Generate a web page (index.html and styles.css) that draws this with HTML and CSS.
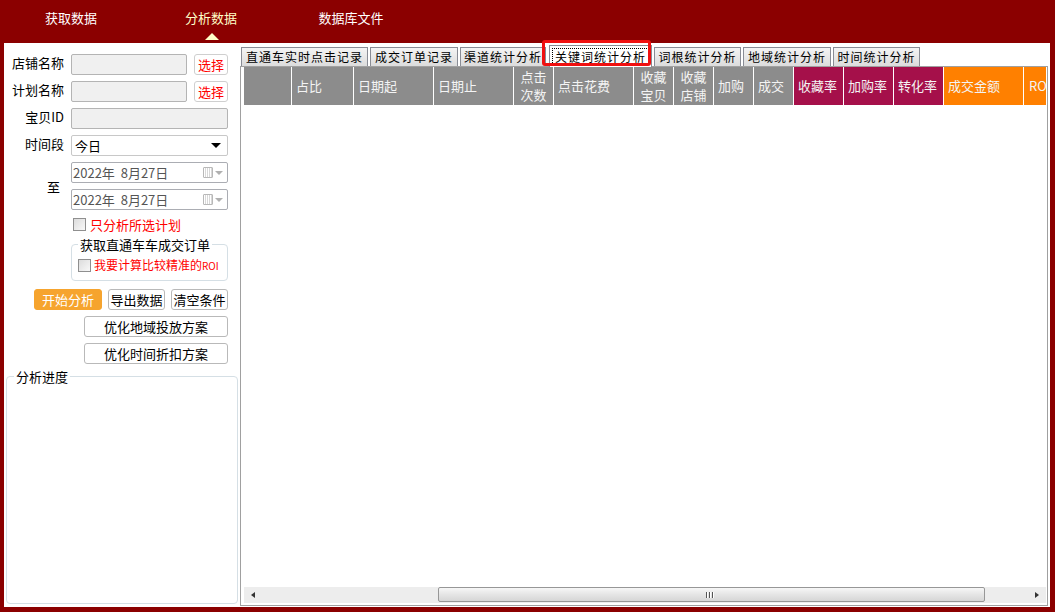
FILE: index.html
```html
<!DOCTYPE html>
<html lang="zh-CN">
<head>
<meta charset="utf-8">
<title>分析数据</title>
<link rel="stylesheet" href="styles.css">
</head>
<body>
<div class="app">
  <nav class="topnav">
    <div class="nav-item">获取数据</div>
    <div class="nav-item active">分析数据</div>
    <div class="nav-item">数据库文件</div>
  </nav>
  <div class="main">
    <aside class="side">
      <div class="form">
        <div class="row">
          <label class="lbl">店铺名称</label>
          <div class="input disabled short"></div>
          <button class="pick">选择</button>
        </div>
        <div class="row">
          <label class="lbl">计划名称</label>
          <div class="input disabled short"></div>
          <button class="pick">选择</button>
        </div>
        <div class="row">
          <label class="lbl">宝贝ID</label>
          <div class="input disabled wide"></div>
        </div>
        <div class="row">
          <label class="lbl">时间段</label>
          <div class="input wide select"><span>今日</span><span class="caret"></span></div>
        </div>
        <div class="daterows">
          <label class="lbl to">至</label>
          <div class="dates">
            <div class="input wide date"><span>2022年&nbsp;&nbsp;8月27日</span><span class="cal"><i class="calbox"></i><i class="caldown"></i></span></div>
            <div class="input wide date"><span>2022年&nbsp;&nbsp;8月27日</span><span class="cal"><i class="calbox"></i><i class="caldown"></i></span></div>
          </div>
        </div>
        <div class="check-row">
          <span class="box"></span><span class="red">只分析所选计划</span>
        </div>
        <fieldset class="grp">
          <legend>获取直通车车成交订单</legend>
          <div class="check-row inner"><span class="box"></span><span class="red small">我要计算比较精准的<span class="roi">ROI</span></span></div>
        </fieldset>
        <div class="btn-row">
          <button class="btn primary">开始分析</button>
          <button class="btn">导出数据</button>
          <button class="btn">清空条件</button>
        </div>
        <button class="btn long">优化地域投放方案</button>
        <button class="btn long">优化时间折扣方案</button>
      </div>
      <fieldset class="progress">
        <legend>分析进度</legend>
      </fieldset>
    </aside>
    <section class="content">
      <div class="tabs">
        <div class="tab w1">直通车实时点击记录</div>
        <div class="tab w2">成交订单记录</div>
        <div class="tab w3">渠道统计分析</div>
        <div class="tab w4 sel"><span class="focus">关键词统计分析</span><span class="mark"></span></div>
        <div class="tab w5">词根统计分析</div>
        <div class="tab w6">地域统计分析</div>
        <div class="tab w7">时间统计分析</div>
      </div>
      <div class="grid">
        <div class="thead">
          <div class="th gray c0"></div>
          <div class="th gray c1">占比</div>
          <div class="th gray c2">日期起</div>
          <div class="th gray c2">日期止</div>
          <div class="th gray c4 two">点击<br>次数</div>
          <div class="th gray c2">点击花费</div>
          <div class="th gray c4 two">收藏<br>宝贝</div>
          <div class="th gray c4 two">收藏<br>店铺</div>
          <div class="th gray c4">加购</div>
          <div class="th gray c4">成交</div>
          <div class="th mag c5">收藏率</div>
          <div class="th mag c5">加购率</div>
          <div class="th mag c5">转化率</div>
          <div class="th org c2">成交金额</div>
          <div class="th org c6">RO</div>
        </div>
        <div class="tbody"></div>
        <div class="hscroll">
          <div class="arrow left"></div>
          <div class="track">
            <div class="pre"></div>
            <div class="thumb"><span class="grip"><i></i><i></i><i></i></span></div>
            <div class="post"></div>
          </div>
          <div class="arrow right"></div>
        </div>
      </div>
    </section>
  </div>
</div>
</body>
</html>
```

FILE: styles.css
```css
* { box-sizing: border-box; }
html, body { margin: 0; padding: 0; }
body {
  background: #8b0000;
  font-family: "Noto Sans CJK SC", "Noto Sans", sans-serif;
  font-size: 13px;
  color: #000;
  width: 1055px;
  height: 612px;
  overflow: hidden;
}
.app { display: flex; flex-direction: column; height: 612px; }

/* top navigation */
.topnav {
  height: 43px;
  display: flex;
  padding-left: 1px;
}
.nav-item {
  width: 140px;
  color: #fff;
  font-size: 13px;
  line-height: 13px;
  text-align: center;
  padding-top: 11px;
  position: relative;
}
.nav-item.active { color: #ffffc8; }
.nav-item.active::after {
  content: "";
  position: absolute;
  left: 64px;
  top: 33px;
  border-left: 7px solid transparent;
  border-right: 7px solid transparent;
  border-bottom: 7px solid #ffffc8;
}

/* main white area */
.main {
  margin: 0 5px 5px 4px;
  height: 564px;
  background: #fff;
  display: flex;
}

/* side */
.side {
  width: 236px;
  display: flex;
  flex-direction: column;
  padding: 11px 0 3px 2px;
}
.form {
  display: flex;
  flex-direction: column;
  padding-right: 10px;
}
.row {
  display: flex;
  align-items: flex-start;
  height: 21px;
  margin-bottom: 6px;
}
.lbl {
  width: 58px;
  text-align: right;
  margin-right: 7px;
  line-height: 13px;
  padding-top: 2px;
  color: #000;
}
.input {
  height: 21px;
  border: 1px solid #abadb3;
  border-radius: 2px;
  background: #fff;
}
.input.disabled { background: #f0f0f0; border-color: #b4b4b4; }
.input.short { width: 116px; }
.input.wide { width: 157px; }
.pick {
  margin-left: 7px;
  width: 34px;
  height: 21px;
  border: 1px solid #cfcfcf;
  border-radius: 3px;
  background: #fff;
  color: #f00;
  font-family: inherit;
  font-size: 13px;
  line-height: 13px;
  padding: 0;
}
.select {
  display: flex;
  align-items: center;
  justify-content: space-between;
  padding: 0 6px 0 3px;
  border-color: #c8c8c8;
  line-height: 13px;
}
.caret {
  width: 0; height: 0;
  border-left: 5px solid transparent;
  border-right: 5px solid transparent;
  border-top: 5px solid #000;
}
.daterows {
  display: flex;
  align-items: center;
  margin-bottom: 7px;
}
.lbl.to { padding-top: 0; padding-right: 4px; }
.dates { display: flex; flex-direction: column; gap: 6px; }
.date {
  display: flex;
  align-items: center;
  justify-content: space-between;
  padding: 0 4px 0 1px;
  color: #555;
  line-height: 13px;
}
.cal { display: flex; align-items: center; gap: 2px; }
.calbox {
  display: block;
  width: 10px; height: 11px;
  border: 1px solid #b8b8b8;
  background:
    repeating-linear-gradient(90deg, #fff 0 1px, #d8d8d8 1px 2px),
    #eee;
  border-radius: 1px;
}
.caldown {
  display: block;
  width: 0; height: 0;
  border-left: 4px solid transparent;
  border-right: 4px solid transparent;
  border-top: 4px solid #b0b0b0;
}
.check-row {
  display: flex;
  align-items: center;
  height: 14px;
  margin-left: 67px;
  gap: 4px;
  line-height: 13px;
  white-space: nowrap;
}
.box {
  width: 13px; height: 13px;
  flex-shrink: 0;
  border: 1px solid #8f8f8f;
  background: linear-gradient(135deg, #dcdcdc, #f8f8f8);
}
.red { color: #f00; }
.red.small { font-size: 12px; }
.roi { font-size: 10px; letter-spacing: 0; }
.grp {
  margin: 7px 0 0 65px;
  width: 157px;
  height: 43px;
  border: 1px solid #d5dfe5;
  border-radius: 4px;
  padding: 0;
}
.grp legend {
  padding: 0 2px;
  margin-left: 6px;
  font-size: 13px;
  line-height: 13px;
}
.check-row.inner { margin: 7px 0 0 6px; gap: 3px; }
.btn-row {
  display: flex;
  margin: 8px 0 0 28px;
  gap: 6px;
}
.btn {
  height: 21px;
  border: 1px solid #b9b9b9;
  border-radius: 3px;
  background: #fff;
  font-family: inherit;
  font-size: 13px;
  line-height: 13px;
  padding: 0;
  color: #000;
  width: 57px;
}
.btn.primary {
  width: 68px;
  background: #f6a42e;
  border-color: #f6a42e;
  color: #fff;
}
.btn.long {
  width: 144px;
  margin: 6px 0 0 78px;
}
.progress {
  flex: 1;
  margin: 6px 0 0 0;
  width: 232px;
  border: 1px solid #d5dfe5;
  border-radius: 4px;
  padding: 0;
}
.progress legend {
  margin-left: 7px;
  padding: 0 2px;
  font-size: 13px;
  line-height: 13px;
}

/* content */
.content {
  flex: 1;
  display: flex;
  flex-direction: column;
  padding: 3px 2px 1px 0;
}
.tabs {
  display: flex;
  align-items: flex-end;
  gap: 2px;
  height: 20px;
  padding-left: 1px;
  position: relative;
  z-index: 2;
}
.tab {
  height: 19px;
  border: 1px solid #898c95;
  border-bottom: none;
  background: linear-gradient(#f4f4f4, #dcdcdc);
  font-size: 12px;
  line-height: 17px;
  text-align: center;
  letter-spacing: 1px;
  white-space: nowrap;
}
.w1 { width: 127px; }
.w2 { width: 88px; }
.w3 { width: 86px; overflow: hidden; }
.w4 { width: 103px; }
.w5 { width: 87px; }
.w6 { width: 88px; }
.w7 { width: 87px; }
.tab.sel {
  height: 22px;
  margin-bottom: -1px;
  margin-left: 1px;
  background: #fff;
  position: relative;
  padding: 2px 2px 0;
}
.focus {
  display: block;
  border: 1px dotted #000;
  line-height: 15px;
  height: 17px;
}
.mark {
  position: absolute;
  left: -8px;
  top: -6px;
  width: 109px;
  height: 26px;
  border: 3px solid #f01010;
  border-radius: 3px;
}
.grid {
  flex: 1;
  border: 1px solid #a0a0a0;
  display: flex;
  flex-direction: column;
  padding: 0 0 2px 3px;
  overflow: hidden;
}
.thead {
  display: flex;
  height: 38px;
  flex-shrink: 0;
}
.th {
  color: #f4f4f4;
  border-right: 1px solid #fff;
  display: flex;
  align-items: center;
  padding-left: 4px;
  font-size: 13px;
  line-height: 18px;
  white-space: nowrap;
}
.th.two { justify-content: center; padding-left: 0; text-align: center; }
.gray { background: #8c8c8c; }
.mag { background: #a5104a; }
.org { background: #ff8000; }
.c0 { width: 48px; }
.c1 { width: 62px; }
.c2 { width: 80px; }
.c4 { width: 40px; }
.c5 { width: 50px; }
.c6 { width: 22px; overflow: hidden; border-right: none; padding-left: 5px; }
.tbody { flex: 1; }
.hscroll {
  height: 16px;
  display: flex;
  background: #ededed;
  margin-right: 1px;
}
.arrow { width: 17px; position: relative; }
.arrow.left::after, .arrow.right::after {
  content: "";
  position: absolute;
  top: 5px;
  width: 0; height: 0;
  border-top: 3px solid transparent;
  border-bottom: 3px solid transparent;
}
.arrow.left::after { left: 7px; border-right: 4px solid #333; }
.arrow.right::after { left: 6px; border-left: 4px solid #333; }
.track { flex: 1; display: flex; }
.pre { width: 177px; }
.post { flex: 1; }
.thumb {
  width: 547px;
  height: 15px;
  border: 1px solid #979797;
  border-radius: 2px;
  background: linear-gradient(#f7f7f7, #e5e5e5 50%, #d6d6d6);
  display: flex;
  align-items: center;
  justify-content: center;
  margin-top: 0;
}
.grip { display: flex; gap: 1px; margin-left: -4px; }
.grip i { display: block; width: 1px; height: 6px; background: #555; border-right: 1px solid #fff; box-sizing: content-box; }
```
